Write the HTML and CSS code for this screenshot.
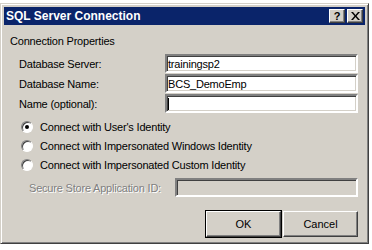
FILE: index.html
```html
<!DOCTYPE html>
<html lang="en">
<head>
  <meta charset="UTF-8">
  <title>SQL Server Connection</title>
  <link rel="stylesheet" href="styles.css">
</head>
<body>

  <div class="window">
    <div class="titlebar">
      <span class="title">SQL Server Connection</span>
      <div class="title-buttons">
        <span class="tbtn">?</span>
        <span class="tbtn tbtn-close">
          <svg width="9" height="8" viewBox="0 0 9 8"><path d="M0 0h2l2.5 3 2.5-3h2L5.5 4 9 8H7L4.5 5 2 8H0l3.5-4z" fill="#000"/></svg>
        </span>
      </div>
    </div>

    <div class="content">
      <div class="group-title">Connection Properties</div>

      <div class="fields">
        <div class="field">
          <label>Database Server:</label>
          <div class="textbox">trainingsp2</div>
        </div>
        <div class="field">
          <label>Database Name:</label>
          <div class="textbox">BCS_DemoEmp</div>
        </div>
        <div class="field">
          <label>Name (optional):</label>
          <div class="textbox"><span class="caret"></span></div>
        </div>
      </div>

      <div class="radios">
        <div class="radio-row"><span class="radio checked"></span>Connect with User's Identity</div>
        <div class="radio-row"><span class="radio"></span>Connect with Impersonated Windows Identity</div>
        <div class="radio-row"><span class="radio"></span>Connect with Impersonated Custom Identity</div>
      </div>

      <div class="field secure">
        <label>Secure Store Application ID:</label>
        <div class="textbox disabled"></div>
      </div>

      <div class="buttons">
        <button class="btn default">OK</button>
        <button class="btn">Cancel</button>
      </div>
    </div>
  </div>

</body>
</html>
```

FILE: styles.css
```css
body {
  margin: 0;
  background: #fff;
  font-family: "Liberation Sans", Arial, sans-serif;
  font-size: 11px;
  letter-spacing: -0.2px;
  color: #000;
}
.window {
  margin-top: 3px;
  width: 369px;
  height: 241px;
  box-sizing: border-box;
  background: #d4d0c8;
  border: 1px solid;
  border-color: #d4d0c8 #404040 #404040 #d4d0c8;
  box-shadow: inset 1px 1px 0 #fff, inset -1px -1px 0 #808080;
  padding: 3px;
}
.titlebar {
  height: 18px;
  background: #0a246a;
  display: flex;
  align-items: center;
  justify-content: space-between;
  padding: 0 2px 0 2px;
}
.title {
  color: #fff;
  font-weight: bold;
  font-size: 12px;
  letter-spacing: 0;
}
.title-buttons {
  display: flex;
  gap: 2px;
}
.tbtn {
  width: 16px;
  height: 14px;
  box-sizing: border-box;
  background: #d4d0c8;
  border: 1px solid;
  border-color: #fff #404040 #404040 #fff;
  box-shadow: inset -1px -1px 0 #808080;
  display: flex;
  align-items: center;
  justify-content: center;
  font-weight: bold;
  font-size: 11px;
  line-height: 1;
}
.content {
  padding: 9px 7px 0 6px;
}
.group-title {
  height: 14px;
  line-height: 14px;
}
.fields {
  margin-top: 6px;
  display: flex;
  flex-direction: column;
  gap: 1px;
}
.field {
  display: flex;
  align-items: center;
  padding-left: 9px;
}
.field label {
  width: 146px;
}
.textbox {
  flex: 1;
  height: 19px;
  box-sizing: border-box;
  background: #fff;
  border: 2px solid;
  border-color: #808080 #fff #fff #808080;
  box-shadow: inset 1px 1px 0 #404040, inset -1px -1px 0 #d4d0c8;
  padding: 1px 1px 0 1px;
  line-height: 14px;
  display: flex;
  align-items: center;
}
.caret {
  width: 1px;
  height: 12px;
  background: #000;
}
.radios {
  margin-top: 4px;
  padding-left: 11px;
  display: flex;
  flex-direction: column;
}
.radio-row {
  height: 19px;
  display: flex;
  align-items: center;
  gap: 7px;
}
.radio {
  width: 12px;
  height: 12px;
  box-sizing: border-box;
  border-radius: 50%;
  background: #fff;
  border: 1px solid;
  border-color: #808080 #fff #fff #808080;
  box-shadow: inset 1px 1px 0 #404040;
  position: relative;
}
.radio.checked::after {
  content: "";
  position: absolute;
  left: 3px;
  top: 3px;
  width: 4px;
  height: 4px;
  border-radius: 50%;
  background: #000;
}
.secure {
  margin-top: 4px;
  padding-left: 19px;
}
.secure label {
  width: 146px;
  color: #808080;
  text-shadow: 1px 1px 0 #fff;
}
.textbox.disabled {
  background: #d4d0c8;
}
.buttons {
  margin-top: 14px;
  display: flex;
  justify-content: flex-end;
  gap: 2px;
}
.btn {
  width: 75px;
  height: 26px;
  box-sizing: border-box;
  font-family: "Liberation Sans", Arial, sans-serif;
  font-size: 11px;
  background: #d4d0c8;
  border: 1px solid;
  border-color: #fff #404040 #404040 #fff;
  box-shadow: inset -1px -1px 0 #808080;
  padding: 0;
  color: #000;
}
.btn.default {
  outline: 1px solid #000;
  outline-offset: 0;
}
```
